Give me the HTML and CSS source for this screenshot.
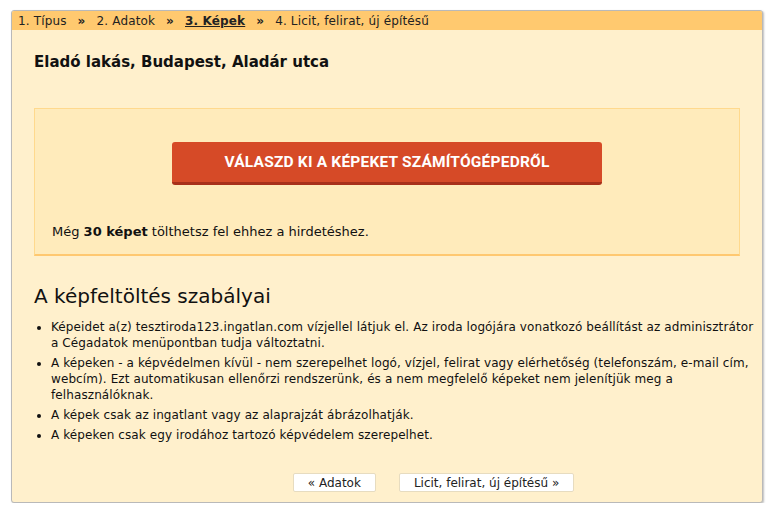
FILE: index.html
```html
<!DOCTYPE html>
<html lang="hu">
<head>
<meta charset="utf-8">
<link rel="stylesheet" href="styles.css">
</head>
<body>
<div class="panel">
  <div class="steps">
    <span>1. Típus</span><span class="sep">»</span>
    <span>2. Adatok</span><span class="sep">»</span>
    <span class="current">3. Képek</span><span class="sep">»</span>
    <span>4. Licit, felirat, új építésű</span>
  </div>
  <div class="body">
    <h1 class="title">Eladó lakás, Budapest, Aladár utca</h1>
    <div class="upload">
      <div class="btn-row"><button class="upload-btn">VÁLASZD KI A KÉPEKET SZÁMÍTÓGÉPEDRŐL</button></div>
      <p class="remain">Még <b>30 képet</b> tölthetsz fel ehhez a hirdetéshez.</p>
    </div>
    <h2 class="rules-title">A képfeltöltés szabályai</h2>
    <ul class="rules">
      <li>Képeidet a(z) tesztiroda123.ingatlan.com vízjellel látjuk el. Az iroda logójára vonatkozó beállítást az adminisztrátor a Cégadatok menüpontban tudja változtatni.</li>
      <li>A képeken - a képvédelmen kívül - nem szerepelhet logó, vízjel, felirat vagy elérhetőség (telefonszám, e-mail cím, webcím). Ezt automatikusan ellenőrzi rendszerünk, és a nem megfelelő képeket nem jelenítjük meg a felhasználóknak.</li>
      <li>A képek csak az ingatlant vagy az alaprajzát ábrázolhatják.</li>
      <li>A képeken csak egy irodához tartozó képvédelem szerepelhet.</li>
    </ul>
    <div class="nav">
      <button class="nav-btn">« Adatok</button>
      <button class="nav-btn">Licit, felirat, új építésű »</button>
    </div>
  </div>
</div>
</body>
</html>
```
FILE: styles.css
```css
html, body { margin: 0; padding: 0; background: #fff; }
body {
  font-family: Verdana, "DejaVu Sans", sans-serif;
  color: #111;
  padding: 10px 11px 0 11px;
}
.panel {
  width: 750px;
  border: 1px solid #b9b9b9;
  border-radius: 3px;
  background: #fff0cc;
  box-shadow: 1px 1px 2px rgba(0,0,0,0.25);
  overflow: hidden;
}
.steps {
  background: #ffc96f;
  height: 19px;
  display: flex;
  align-items: center;
  font-size: 12px;
  letter-spacing: 0.15px;
  padding-left: 6px;
  color: #222;
}
.steps .sep { font-weight: bold; margin: 0 11px 0 11px; }
.steps .current { font-weight: bold; text-decoration: underline; }
.body { padding: 0 22px 10px 22px; }
.title {
  font-size: 15px;
  font-weight: bold;
  margin: 0;
  padding-top: 23px;
  line-height: 18px;
  color: #111;
}
.upload {
  margin-top: 37px;
  background: #ffebbb;
  border: 1px solid #ffd98d;
  border-bottom: 2px solid #ffc870;
  height: 148px;
  box-sizing: border-box;
}
.btn-row { display: flex; justify-content: center; padding-top: 33px; }
.upload-btn {
  width: 430px;
  height: 43px;
  background: #d64a27;
  border: 0;
  border-bottom: 3px solid #a8301a;
  border-radius: 3px;
  color: #fff;
  font-family: Roboto, "Liberation Sans", sans-serif;
  font-weight: bold;
  font-size: 15.5px;
  letter-spacing: 0.2px;
}
.remain {
  margin: 39px 0 0 17px;
  font-size: 13px;
  line-height: 16px;
}
.rules-title {
  margin: 28px 0 0 0;
  font-size: 20px;
  font-weight: normal;
  line-height: 24px;
}
.rules {
  margin: 11px -16px 0 0;
  padding: 0 0 0 17px;
  font-size: 12px;
  line-height: 16px;
  letter-spacing: 0.1px;
}
.rules li { margin-bottom: 4px; }
.nav {
  display: flex;
  justify-content: center;
  gap: 23px;
  margin-top: 30px;
  padding-left: 93px;
}
.nav-btn {
  background: #fff;
  border: 1px solid #e7dcc0;
  border-radius: 2px;
  font-family: Verdana, "DejaVu Sans", sans-serif;
  font-size: 12px;
  height: 19px;
  padding: 0 14px;
  color: #222;
}
```
